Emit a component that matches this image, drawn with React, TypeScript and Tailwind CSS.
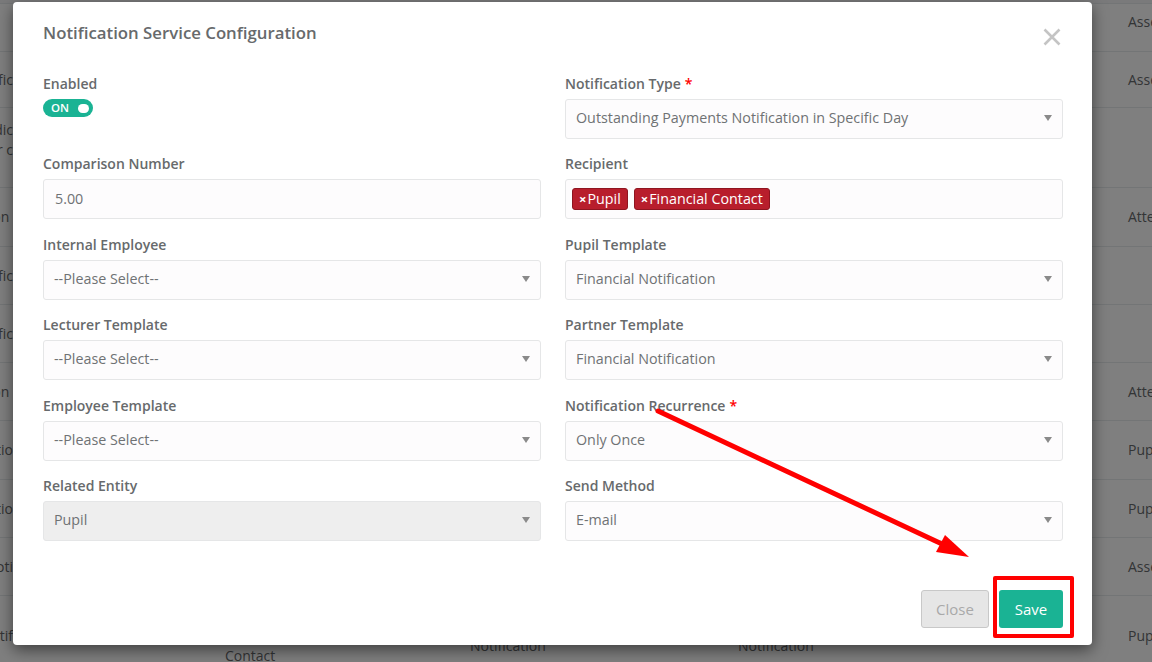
import React from 'react';

type Row = { h: number; left?: string[]; right?: string; mid?: string[][]; pb?: number };

// background table rows (dimmed behind the modal)
const rows: Row[] = [
  { h: 4 },
  { h: 48, right: 'Assessment', pb: 12 },
  { h: 56, left: ['Notific'], right: 'Assessment' },
  { h: 80, left: ['Periodic', 'for c'], pb: 16 },
  { h: 59, left: ['Notification\u00a0'], right: 'Attendance' },
  { h: 58, left: ['Notific'] },
  { h: 58, left: ['Notific'] },
  { h: 58, left: ['Notification\u00a0'], right: 'Attendance' },
  { h: 59, left: ['Notificatio'], right: 'Pupil' },
  { h: 58, left: ['Notificatio'], right: 'Pupil' },
  { h: 58, left: ['Noti'], right: 'Assessment' },
  {
    h: 80,
    left: ['Notif'],
    right: 'Pupil',
    mid: [['Pupil and', 'Financial', 'Contact'], ['Payment', 'Notification'], ['Payment', 'Notification']],
  },
];

const Caret = () => (
  <svg width="8" height="6" viewBox="0 0 8 6" className="shrink-0">
    <path d="M0 0 H8 L4 6 Z" fill="#8a8a8a" />
  </svg>
);

const Label = ({ text, required }: { text: string; required?: boolean }) => (
  <div className="mb-[5px] h-5 text-[14px] font-semibold leading-5 text-[#676a6c]">
    {text}
    {required && <span className="ml-1 text-[#ff0000]">*</span>}
  </div>
);

const Select = ({ value, disabled }: { value: string; disabled?: boolean }) => (
  <div
    className={`flex h-10 items-center justify-between rounded-[3px] border border-[#e5e6e7] pb-[2px] pl-[10px] pr-[10px] text-[14.3px] text-[#6f7274] ${
      disabled ? 'bg-[#eeeeee]' : 'bg-[#fdfcfd]'
    }`}
  >
    <span>{value}</span>
    <Caret />
  </div>
);

const Tag = ({ text }: { text: string }) => (
  <span className="flex h-[22px] items-center rounded-[3px] border border-[#8e1520] bg-[#b81e2c] px-[6px] text-[14.3px] leading-none text-white">
    <span className="mr-[1px] text-[13px] font-bold">×</span>
    {text}
  </span>
);

export default function App() {
  return (
    <div className="relative h-[662px] w-[1152px] overflow-hidden bg-white font-['Open_Sans',sans-serif] text-[14px] text-[#676a6c]">
      {/* page behind */}
      <div className="flex flex-col">
        {rows.map((r, i) => (
          <div
            key={i}
            className={`grid shrink-0 grid-cols-[217px_245px_268px_390px_1fr] border-b border-[#e7eaec] leading-5 ${
              i === 0 ? 'bg-[#f5f5f6]' : ''
            }`}
            style={{ height: r.h }}
          >
            <div className="flex items-center" style={{ paddingBottom: r.pb ?? 0 }}>
              <div className="flex w-[13px] flex-col items-end overflow-visible whitespace-nowrap">
                {r.left?.map((t, k) => (
                  <span key={k} className="flex justify-end">
                    {t}
                  </span>
                ))}
              </div>
            </div>
            {[0, 1, 2].map((c) => (
              <div key={c} className="flex flex-col justify-center pl-2">
                {r.mid?.[c]?.map((t, k) => (
                  <span key={k}>{t}</span>
                ))}
              </div>
            ))}
            <div className="flex items-center pl-2" style={{ paddingBottom: r.pb ?? 0 }}>
              {r.right}
            </div>
          </div>
        ))}
      </div>

      {/* backdrop */}
      <div className="absolute inset-0 bg-black/50" />

      {/* modal */}
      <div className="absolute left-[13px] top-[2px] flex h-[643px] w-[1079px] flex-col rounded-[4px] bg-white pl-[30px] pr-[29px] shadow-[0_5px_15px_rgba(0,0,0,0.5)]">
        <div className="flex items-start justify-between pt-[19px]">
          <h4 className="text-[16.8px] font-semibold leading-6 text-[#676a6c]">Notification Service Configuration</h4>
          <svg width="18" height="18" viewBox="0 0 18 18" className="mr-[2px] mt-[7px]">
            <path d="M1.5 1.5 L16.5 16.5 M16.5 1.5 L1.5 16.5" stroke="#c4c4c4" strokeWidth="2.6" strokeLinecap="butt" />
          </svg>
        </div>

        <div className="mt-[28px] grid grid-cols-2 gap-x-6 gap-y-[15.4px]">
          <div>
            <Label text="Enabled" />
            <div className="flex h-[18px] w-[50px] items-center justify-between rounded-full bg-[#1ab394] pl-[8px] pr-[4px]">
              <span className="text-[11.5px] font-semibold leading-none text-white">ON</span>
              <span className="h-[9px] w-[11px] rounded-full bg-white" />
            </div>
          </div>
          <div>
            <Label text="Notification Type" required />
            <Select value="Outstanding Payments Notification in Specific Day" />
          </div>

          <div>
            <Label text="Comparison Number" />
            <div className="flex h-10 items-center rounded-[3px] border border-[#e5e6e7] bg-[#fdfcfd] pb-[2px] pl-[11px] text-[14.3px] text-[#6f7274]">
              5.00
            </div>
          </div>
          <div>
            <Label text="Recipient" />
            <div className="flex h-10 items-center gap-[6px] rounded-[3px] border border-[#e5e6e7] bg-[#fdfcfd] pl-[6px]">
              <Tag text="Pupil" />
              <Tag text="Financial Contact" />
            </div>
          </div>

          <div>
            <Label text="Internal Employee" />
            <Select value="--Please Select--" />
          </div>
          <div>
            <Label text="Pupil Template" />
            <Select value="Financial Notification" />
          </div>

          <div>
            <Label text="Lecturer Template" />
            <Select value="--Please Select--" />
          </div>
          <div>
            <Label text="Partner Template" />
            <Select value="Financial Notification" />
          </div>

          <div>
            <Label text="Employee Template" />
            <Select value="--Please Select--" />
          </div>
          <div>
            <Label text="Notification Recurrence" required />
            <Select value="Only Once" />
          </div>

          <div>
            <Label text="Related Entity" />
            <Select value="Pupil" disabled />
          </div>
          <div>
            <Label text="Send Method" />
            <Select value="E-mail" />
          </div>
        </div>

        <div className="mt-[49px] flex justify-end gap-[10px]">
          <button className="h-[38px] w-[68px] rounded-[3px] border border-[#c8c8c8] bg-[#e6e6e6] text-[15px] text-[#a9a9a9]">
            Close
          </button>
          <button className="h-[38px] w-[64px] rounded-[3px] bg-[#1ab394] text-[15px] text-white">Save</button>
        </div>
      </div>

      {/* annotation: arrow and highlight box */}
      <svg className="pointer-events-none absolute inset-0" width="1152" height="662" viewBox="0 0 1152 662">
        <line x1="658" y1="411" x2="942" y2="544" stroke="#ff0000" strokeWidth="5" strokeLinecap="round" />
        <path d="M969 557 L936 552 L945 535 Z" fill="#ff0000" />
      </svg>
      <div className="pointer-events-none absolute left-[993px] top-[576px] h-[62px] w-[81px] rounded-[2px] border-[4px] border-[#ff0000]" />
    </div>
  );
}
